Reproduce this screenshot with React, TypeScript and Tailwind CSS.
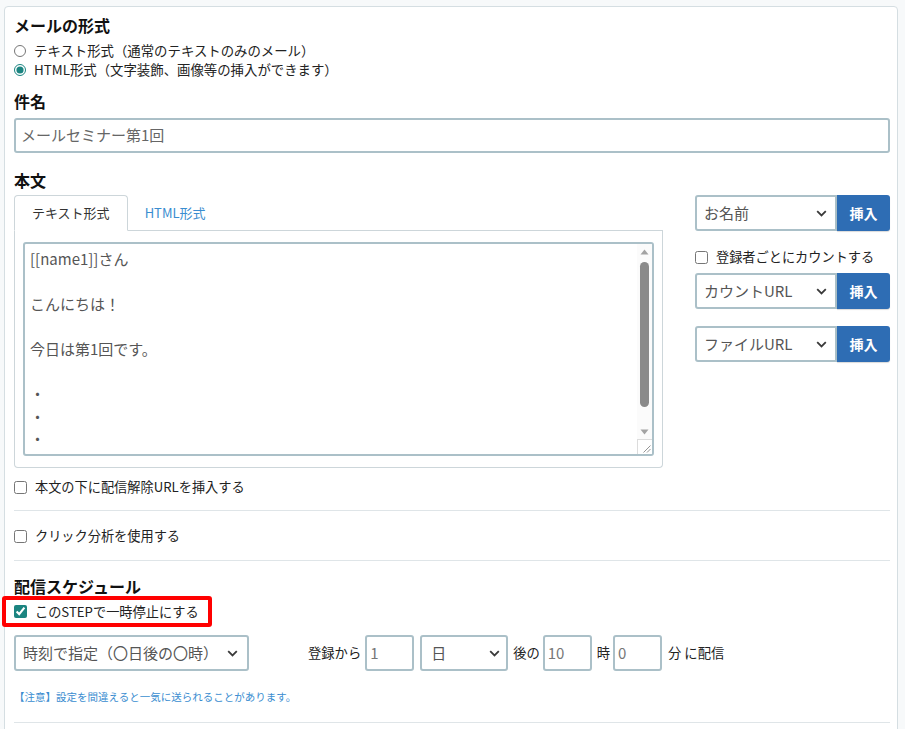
import React from "react";

function Chevron() {
  return (
    <svg width="11" height="7" viewBox="0 0 11 7" className="shrink-0">
      <path d="M1.2 1.2l4.3 4.3 4.3-4.3" fill="none" stroke="#3a3a3a" strokeWidth="1.8" />
    </svg>
  );
}

function FakeSelect({ label, className }: { label: string; className: string }) {
  return (
    <div
      className={
        "flex h-[36px] items-center justify-between border-2 border-[#abc0c8] bg-white text-[15px] text-[#555] " +
        className
      }
    >
      <span className="whitespace-nowrap">{label}</span>
      <Chevron />
    </div>
  );
}

function InsertRow({ label }: { label: string }) {
  return (
    <div className="flex h-[36px]">
      <FakeSelect label={label} className="w-[142px] rounded-l-[3px] pl-[7px] pr-[8px]" />
      <button className="flex h-[36px] w-[53px] items-center justify-center rounded-r-[3px] bg-[#2e6db4] text-[14px] font-bold text-white shadow-[0_1px_1px_rgba(0,0,0,0.15)]">
        挿入
      </button>
    </div>
  );
}

function Check({ label, checked = false }: { label: string; checked?: boolean }) {
  return (
    <label className="flex h-[20px] items-center gap-[8px] text-[13.2px] text-[#222]">
      <input
        type="checkbox"
        defaultChecked={checked}
        className="h-[13px] w-[13px] shrink-0 accent-[#1b8480]"
      />
      <span className="whitespace-nowrap">{label}</span>
    </label>
  );
}

function NumInput({ value }: { value: string }) {
  return (
    <div className="flex h-[36px] w-[49px] items-center rounded-[3px] border-2 border-[#abc0c8] bg-white pl-[3px] text-[15px] text-[#777]">
      {value}
    </div>
  );
}

export default function App() {
  const lines = ["[[name1]]さん", "", "こんにちは！", "", "今日は第1回です。", "", "・", "・", "・"];
  return (
    <div className="min-h-[729px] bg-[#f7f9fa] pl-[4px] pr-[7px] pt-[6px] font-['Noto_Sans_CJK_JP','Noto_Sans',sans-serif] text-[#222]">
      <div className="rounded-t-[4px] border border-[#d5dee2] bg-white pb-[30px] pl-[9px] pr-[7px] pt-[7px]">
        <h2 className="text-[16px] font-bold leading-[22px] text-[#111]">メールの形式</h2>
        <div className="mt-[5px] flex flex-col">
          <label className="flex h-[19px] items-center gap-[8px] text-[13.4px]">
            <input type="radio" name="fmt" className="h-[12px] w-[12px] accent-[#1b8480]" />
            テキスト形式（通常のテキストのみのメール）
          </label>
          <label className="flex h-[19px] items-center gap-[8px] text-[13.4px]">
            <input type="radio" name="fmt" defaultChecked className="h-[12px] w-[12px] accent-[#1b8480]" />
            HTML形式（文字装飾、画像等の挿入ができます）
          </label>
        </div>

        <h2 className="mt-[11px] text-[16px] font-bold leading-[22px] text-[#111]">件名</h2>
        <div className="mt-[6px] flex h-[35px] items-center rounded-[3px] border-2 border-[#abc0c8] pl-[5px] text-[15px] text-[#666]">
          メールセミナー第1回
        </div>

        <h2 className="mt-[16px] text-[16px] font-bold leading-[22px] text-[#111]">本文</h2>
        <div className="mt-[4px] flex">
          <div className="w-[649px]">
            <div className="flex h-[36px] border-b border-[#cdd6da]">
              <div className="-mb-px flex h-[36px] items-center rounded-t-[4px] border border-[#cdd6da] border-b-white bg-white px-[17px] text-[13px] text-[#333]">
                テキスト形式
              </div>
              <div className="flex h-[35px] items-center px-[17px] text-[13px] text-[#3a8dd0]">HTML形式</div>
            </div>
            <div className="rounded-b-[4px] border-x border-b border-[#cdd6da] px-[8px] pb-[11px] pt-[11px]">
              <div className="flex h-[214px] overflow-hidden rounded-[3px] border-2 border-[#abc0c8] bg-white">
                <div className="flex-1 overflow-hidden pl-[5px] pt-[4px] text-[15px] leading-[22.5px] text-[#555]">
                  {lines.map((l, i) => (
                    <div key={i} className="h-[22.5px] whitespace-nowrap">
                      {l}
                    </div>
                  ))}
                </div>
                <div className="flex w-[15px] flex-col bg-[#fbfbfb]">
                  <div className="flex h-[15px] items-center justify-center">
                    <svg width="9" height="6" viewBox="0 0 9 6">
                      <path d="M4.5 0.5L8.5 5.5H0.5Z" fill="#a3a3a3" />
                    </svg>
                  </div>
                  <div className="flex flex-1 justify-center pt-[3px]">
                    <div className="h-[145px] w-[9px] rounded-full bg-[#8a8a8a]" />
                  </div>
                  <div className="flex h-[15px] items-center justify-center">
                    <svg width="9" height="6" viewBox="0 0 9 6">
                      <path d="M0.5 0.5H8.5L4.5 5.5Z" fill="#a3a3a3" />
                    </svg>
                  </div>
                  <div className="flex h-[15px] items-end justify-end border-l border-t border-[#dcdcdc] bg-white pb-[1px] pr-[1px]">
                    <svg width="9" height="9" viewBox="0 0 9 9">
                      <path d="M8.5 1.5L1.5 8.5M8.5 5L5 8.5" stroke="#888" strokeWidth="0.9" />
                    </svg>
                  </div>
                </div>
              </div>
            </div>
          </div>

          <div className="ml-auto flex w-[195px] flex-col">
            <InsertRow label="お名前" />
            <div className="mt-[16px]">
              <Check label="登録者ごとにカウントする" />
            </div>
            <div className="mt-[6px]">
              <InsertRow label="カウントURL" />
            </div>
            <div className="mt-[17px]">
              <InsertRow label="ファイルURL" />
            </div>
          </div>
        </div>

        <div className="mt-[9px]">
          <Check label="本文の下に配信解除URLを挿入する" />
        </div>
        <hr className="mt-[13px] border-t border-[#dfe5e8]" />
        <div className="mt-[15px]">
          <Check label="クリック分析を使用する" />
        </div>
        <hr className="mt-[14px] border-t border-[#dfe5e8]" />

        <h2 className="mt-[15px] text-[16px] font-bold leading-[20px] text-[#111]">配信スケジュール</h2>
        <div className="-ml-[12px] flex h-[31px] w-[210px] items-center rounded-[3px] border-[4px] border-[#ff0000] pl-[8px]">
          <Check label="このSTEPで一時停止にする" checked />
        </div>

        <div className="mt-[8px] flex items-center text-[13.3px] text-[#222]">
          <FakeSelect label="時刻で指定（〇日後の〇時）" className="w-[235px] rounded-[3px] pl-[7px] pr-[9px]" />
          <span className="ml-[59px]">登録から</span>
          <div className="ml-[4px]">
            <NumInput value="1" />
          </div>
          <FakeSelect label="日" className="ml-[6px] w-[88px] rounded-[3px] pl-[9px] pr-[6px]" />
          <span className="ml-[5px]">後の</span>
          <div className="ml-[3px]">
            <NumInput value="10" />
          </div>
          <span className="ml-[5px]">時</span>
          <div className="ml-[3px]">
            <NumInput value="0" />
          </div>
          <span className="ml-[6px]">分 に配信</span>
        </div>

        <p className="mt-[18px] text-[10.5px] leading-[16px] text-[#3a8dd0]">
          【注意】設定を間違えると一気に送られることがあります。
        </p>
        <hr className="mt-[17px] border-t border-[#dfe5e8]" />
      </div>
    </div>
  );
}
